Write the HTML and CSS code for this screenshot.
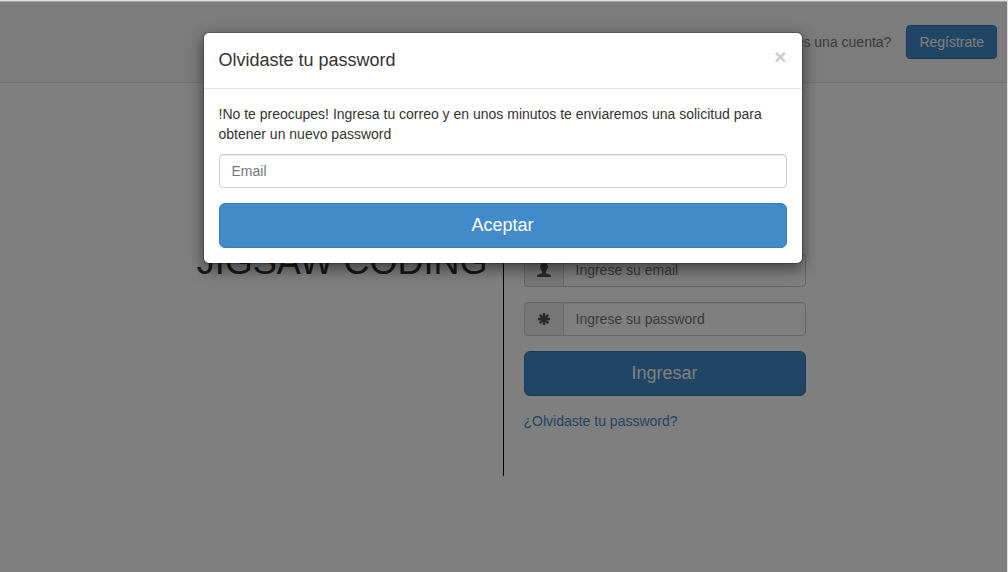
FILE: index.html
```html
<!DOCTYPE html>
<html lang="es">
<head>
<meta charset="utf-8">
<title>Jigsaw Coding</title>
<link rel="stylesheet" href="styles.css">
</head>
<body>
<div class="page">
  <header class="navbar">
    <span>¿No tienes una cuenta?</span>
    <button type="button" class="btn">Regístrate</button>
  </header>
  <main class="container">
    <section class="brand"><h1 class="brand-name">JIGSAW CODING</h1></section>
    <form class="login">
      <div class="input-group">
        <label class="addon" for="user" aria-label="Email">
          <svg width="14" height="14" viewBox="0 0 14 14" fill="currentColor"><path d="M7 0C4.500 0 3.200 1.500 3.200 3.600c0 2 .9 3.800 2 4.900v1.500C4.600 10.900 1 11 .1 12.300L0 14h14l-.1-1.700C13 11 9.400 10.900 8.800 10V8.500c1.100-1.100 2-2.900 2-4.900C10.800 1.500 9.500 0 7 0z"/></svg>
        </label>
        <input class="control" id="user" type="email" placeholder="Ingrese su email">
      </div>
      <div class="input-group">
        <label class="addon" for="pass" aria-label="Password">
          <svg width="14" height="14" viewBox="0 0 14 14" stroke="currentColor" stroke-width="2.400"><path d="M7 1v12M1 7h12M2.800 2.800l8.400 8.400M11.200 2.800l-8.400 8.400"/></svg>
        </label>
        <input class="control" id="pass" type="password" placeholder="Ingrese su password">
      </div>
      <button type="button" class="btn btn-large">Ingresar</button>
      <a class="forgot" href="#">¿Olvidaste tu password?</a>
    </form>
  </main>
  <div class="backdrop">
    <div class="modal" role="dialog" aria-labelledby="modal-title">
      <div class="modal-header">
        <h4 class="modal-title" id="modal-title">Olvidaste tu password</h4>
        <button type="button" class="close" aria-label="Cerrar">×</button>
      </div>
      <form class="modal-body">
        <p class="modal-text">!No te preocupes! Ingresa tu correo y en unos minutos te enviaremos una solicitud para obtener un nuevo password</p>
        <input class="control modal-email" type="email" placeholder="Email" aria-label="Email">
        <button type="button" class="btn btn-large">Aceptar</button>
      </form>
    </div>
  </div>
</div>
</body>
</html>
```
FILE: styles.css
```css
* {
  box-sizing: border-box;
}

body {
  margin: 0;
  background: #fff;
  color: #333;
  font: 14px/20px "Liberation Sans", Arial, sans-serif;
}

.page {
  position: relative;
  min-height: 100vh;
  border-top: 1px solid #dcdede;
  border-right: 1px solid #dcdede;
}

.navbar {
  display: flex;
  justify-content: flex-end;
  align-items: center;
  gap: 15px;
  padding: 24px 10px 23px;
  border-bottom: 1px solid #e7e7e7;
  background: #f8f8f8;
  color: #777;
}

.container {
  display: grid;
  grid-template-columns: 1fr 1fr;
  max-width: 970px;
  margin: 20px auto 0;
}

.brand {
  padding: 139px 15px 45px;
  border-right: 1px solid #000;
  text-align: right;
}

.brand-name {
  margin: 0;
  font-size: 36px;
  font-weight: 400;
  line-height: 40px;
}

.login {
  display: flex;
  flex-direction: column;
  align-items: flex-start;
  gap: 15px;
  width: 302px;
  padding: 150px 0 45px 20px;
}

.input-group {
  display: flex;
  width: 100%;
}

.addon {
  display: flex;
  flex: none;
  align-items: center;
  justify-content: center;
  width: 39px;
  border: 1px solid #ccc;
  border-right: 0;
  border-radius: 4px 0 0 4px;
  background: #eee;
  color: #555;
}

.control {
  width: 100%;
  min-width: 0;
  height: 34px;
  padding: 6px 12px;
  border: 1px solid #ccc;
  border-radius: 4px;
  background: #fff;
  box-shadow: inset 0 1px 1px rgba(0, 0, 0, .075);
  color: #555;
  font: inherit;
}

.control::placeholder {
  color: #777;
}

.input-group .control {
  border-radius: 0 4px 4px 0;
}

.btn {
  height: 34px;
  padding: 6px 12px;
  border: 1px solid #357ebd;
  border-radius: 4px;
  background: #428bca;
  color: #fff;
  font: inherit;
}

.btn-large {
  width: 100%;
  height: 45px;
  padding: 0 16px 2px;
  border-radius: 6px;
  font-size: 18px;
}

.forgot {
  color: #428bca;
  text-decoration: none;
}

.backdrop {
  position: absolute;
  inset: 0;
  padding: 30px 12px 30px 10px;
  border-top: 1px solid #a8aaaa;
  background: rgba(0, 0, 0, .5);
}

.modal {
  max-width: 600px;
  margin: 0 auto;
  border: 1px solid rgba(0, 0, 0, .2);
  border-radius: 6px;
  background: #fff;
  background-clip: padding-box;
  box-shadow: 0 5px 15px rgba(0, 0, 0, .5);
}

.modal-header {
  display: flex;
  align-items: flex-start;
  justify-content: space-between;
  padding: 15px;
  border-bottom: 1px solid #e5e5e5;
}

.modal-title {
  margin: 0;
  font-size: 18px;
  font-weight: 400;
  line-height: 25px;
}

.close {
  padding: 0;
  border: 0;
  background: none;
  color: #ccc;
  font: bold 21px/18px "Liberation Sans", Arial, sans-serif;
}

.modal-body {
  padding: 15px;
}

.modal-text {
  margin: 0 0 10px;
}

.modal-email {
  display: block;
  margin-bottom: 15px;
}
```
